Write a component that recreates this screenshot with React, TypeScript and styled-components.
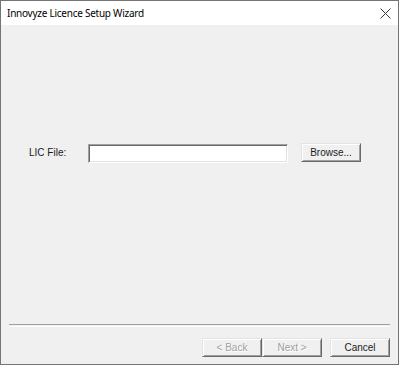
import React from 'react';
import styled, { createGlobalStyle } from 'styled-components';

const GlobalStyle = createGlobalStyle`
    html, body {
        margin: 0;
        padding: 0;
        background: #f0f0f0;
    }
`;

const Window = styled.div`
    display: flex;
    flex-direction: column;
    width: 399px;
    height: 365px;
    box-sizing: border-box;
    border: 1px solid #747474;
    background: #f0f0f0;
    font-family: "Liberation Sans", Arial, sans-serif;
    font-size: 10px;
    color: #1a1a1a;
`;

const TitleBar = styled.div`
    display: flex;
    align-items: center;
    justify-content: space-between;
    height: 24px;
    padding: 0 7px 0 6px;
    background: #fff;
    font-family: "Noto Sans", "Open Sans", sans-serif;
    font-size: 10px;
    letter-spacing: -0.25px;
    color: #000;
`;

const CloseIcon = () => (
    <svg width="11" height="11" viewBox="0 0 11 11">
        <path d="M0.5 0.5 L10.5 10.5 M10.5 0.5 L0.5 10.5" stroke="#3a3a3a" strokeWidth="1" fill="none" />
    </svg>
);

const Content = styled.div`
    flex: 1;
    padding: 118px 0 0 28px;
`;

const FieldRow = styled.div`
    display: flex;
    align-items: flex-start;
`;

const Label = styled.label`
    width: 59px;
    padding-top: 4px;
`;

const FileInput = styled.div`
    width: 200px;
    height: 19px;
    margin-top: 1px;
    box-sizing: border-box;
    background: #fff;
    border: 1px solid;
    border-color: #a0a0a0 #fff #fff #a0a0a0;
    box-shadow: inset 1px 1px #696969, inset -1px -1px #e3e3e3;
`;

const Button = styled.div<{ $disabled?: boolean }>`
    display: flex;
    align-items: center;
    justify-content: center;
    width: 60px;
    height: 19px;
    box-sizing: border-box;
    background: #f0f0f0;
    border: 1px solid;
    border-color: #e3e3e3 #696969 #696969 #e3e3e3;
    box-shadow: inset 1px 1px #fff, inset -1px -1px #a0a0a0;
    color: ${p => (p.$disabled ? '#a0a0a0' : '#1a1a1a')};
    text-shadow: ${p => (p.$disabled ? '1px 1px #fff' : 'none')};
`;

const BrowseButton = styled(Button)`
    margin-left: 13px;
`;

const Separator = styled.div`
    margin: 0 8px;
    height: 1px;
    border-top: 1px solid #a0a0a0;
    border-bottom: 1px solid #fff;
`;

const Footer = styled.div`
    display: flex;
    justify-content: flex-end;
    padding: 11px 8px 7px;
`;

const CancelButton = styled(Button)`
    margin-left: 8px;
`;

export default function App() {
    return (
        <>
            <GlobalStyle />
            <Window>
                <TitleBar>
                    <span>Innovyze Licence Setup Wizard</span>
                    <CloseIcon />
                </TitleBar>
                <Content>
                    <FieldRow>
                        <Label>LIC File:</Label>
                        <FileInput />
                        <BrowseButton>Browse...</BrowseButton>
                    </FieldRow>
                </Content>
                <Separator />
                <Footer>
                    <Button $disabled>&lt; Back</Button>
                    <Button $disabled>Next &gt;</Button>
                    <CancelButton>Cancel</CancelButton>
                </Footer>
            </Window>
        </>
    );
}
